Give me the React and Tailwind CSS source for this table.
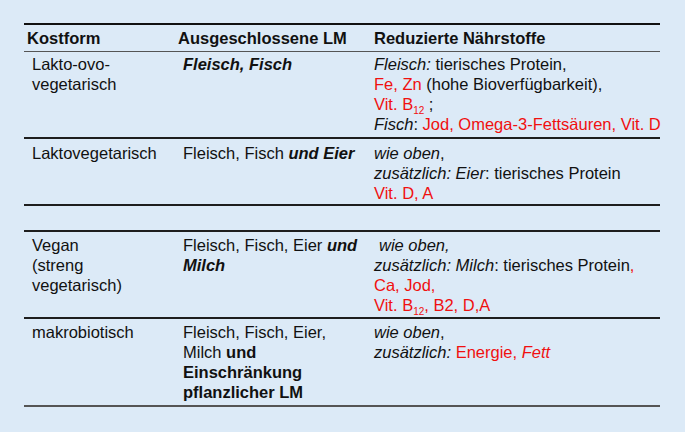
import React from 'react';

const Red = ({ children, className = '' }) => <span className={`text-[#f01010] ${className}`}>{children}</span>;

const Sub = ({ children }) => (
  <span className="relative top-[4px] text-[10px] leading-none">{children}</span>
);

const Row = ({ a, b, c, className = '' }) => (
  <div className={`grid grid-cols-[154px_196px_1fr] border-b-2 border-[#1e1e1e] ${className}`}>
    <div className="pl-[8px]">{a}</div>
    <div className="pl-[5px]">{b}</div>
    <div className="whitespace-nowrap">{c}</div>
  </div>
);

const App = () => {
  return (
    <div
      className="w-[685px] h-[432px] bg-[#dceaf7] pt-[23px] text-[#111] text-[16.5px] leading-[20px]"
      style={{ fontFamily: '"Liberation Sans", Arial, sans-serif' }}
    >
      <div className="ml-[24px] w-[636px] border-t-[2.5px] border-[#111]">
        <div className="grid grid-cols-[154px_196px_1fr] h-[27px] items-center border-b-[1.5px] border-[#555] font-bold">
          <div className="pl-[3px]">Kostform</div>
          <div>Ausgeschlossene LM</div>
          <div>Reduzierte Nährstoffe</div>
        </div>

        <Row
          className="pt-[2px] pb-[3px]"
          a={<>Lakto-ovo-<br />vegetarisch</>}
          b={<span className="font-bold italic">Fleisch, Fisch</span>}
          c={
            <>
              <i>Fleisch:</i> tierisches Protein,<br />
              <Red>Fe, Zn</Red> (hohe Bioverfügbarkeit),<br />
              <Red>Vit. B<Sub>12</Sub></Red> ;<br />
              <i>Fisch</i>: <Red>Jod, Omega-3-Fettsäuren, Vit. D</Red>
            </>
          }
        />

        <Row
          className="pt-[4px] pb-[1px]"
          a="Laktovegetarisch"
          b={<>Fleisch, Fisch <span className="font-bold italic">und Eier</span></>}
          c={
            <>
              <i>wie oben</i>,<br />
              <i>zusätzlich: Eier</i>: tierisches Protein<br />
              <Red>Vit. D, A</Red>
            </>
          }
        />

        <div className="h-[26px] border-b-2 border-[#1e1e1e]" />

        <Row
          className="pt-[3px] pb-[2px]"
          a={<>Vegan<br />(streng<br />vegetarisch)</>}
          b={<>Fleisch, Fisch, Eier <span className="font-bold italic">und</span><br /><span className="font-bold italic">Milch</span></>}
          c={
            <>
              <i className="pl-[5px]">wie oben,</i><br />
              <i>zusätzlich: Milch</i>: tierisches Protein<Red>,</Red><br />
              <Red>Ca, Jod,</Red><br />
              <Red>Vit. B<Sub>12</Sub>, B2, D,A</Red>
            </>
          }
        />

        <div className="grid grid-cols-[154px_196px_1fr] pt-[3px] pb-[3px] border-b-2 border-[#555]">
          <div className="pl-[8px]">makrobiotisch</div>
          <div className="pl-[5px]">
            Fleisch, Fisch, Eier,<br />
            Milch <b>und</b><br />
            <b>Einschränkung</b><br />
            <b>pflanzlicher LM</b>
          </div>
          <div className="whitespace-nowrap">
            <i>wie oben</i>,<br />
            <i>zusätzlich:</i> <Red>Energie, <i>Fett</i></Red>
          </div>
        </div>
      </div>
    </div>
  );
};

export default App;
